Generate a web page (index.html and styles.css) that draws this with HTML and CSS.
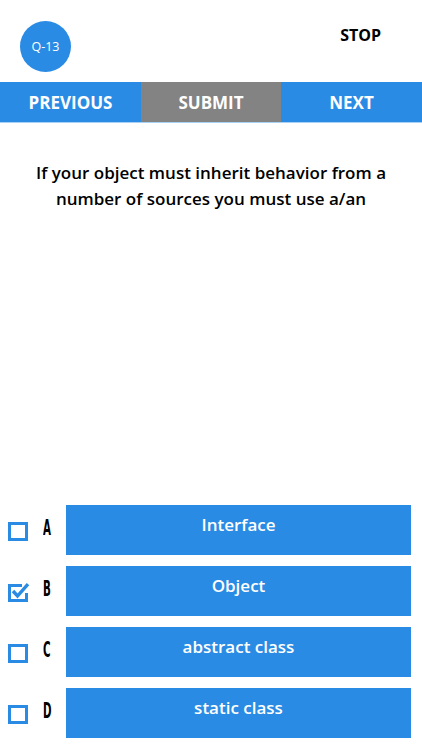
FILE: index.html
```html
<!DOCTYPE html>
<html>
<head>
<meta charset="utf-8">
<link rel="stylesheet" href="styles.css">
</head>
<body>
<div class="page">
  <header class="top">
    <div class="badge">Q-13</div>
    <div class="stop">STOP</div>
  </header>
  <nav class="nav">
    <div class="nav-item">PREVIOUS</div>
    <div class="nav-item nav-submit">SUBMIT</div>
    <div class="nav-item">NEXT</div>
  </nav>
  <div class="question">If your object must inherit behavior from a number of sources you must use a/an</div>
  <div class="options">
    <div class="option">
      <div class="check"><svg width="22" height="22" viewBox="0 0 22 22"><rect x="2.5" y="3.5" width="17" height="16" fill="none" stroke="#2a8be5" stroke-width="3"/></svg></div>
      <div class="letter">A</div>
      <div class="answer">Interface</div>
    </div>
    <div class="option">
      <div class="check"><svg width="22" height="22" viewBox="0 0 22 22"><path d="M15 4.5H2.5V19.5H19.5V12" fill="none" stroke="#2a8be5" stroke-width="3"/><path d="M6 10L10.5 15L21 3" fill="none" stroke="#2a8be5" stroke-width="3.4"/></svg></div>
      <div class="letter">B</div>
      <div class="answer">Object</div>
    </div>
    <div class="option">
      <div class="check"><svg width="22" height="22" viewBox="0 0 22 22"><rect x="2.5" y="3.5" width="17" height="16" fill="none" stroke="#2a8be5" stroke-width="3"/></svg></div>
      <div class="letter">C</div>
      <div class="answer">abstract class</div>
    </div>
    <div class="option">
      <div class="check"><svg width="22" height="22" viewBox="0 0 22 22"><rect x="2.5" y="3.5" width="17" height="16" fill="none" stroke="#2a8be5" stroke-width="3"/></svg></div>
      <div class="letter">D</div>
      <div class="answer">static class</div>
    </div>
  </div>
</div>
</body>
</html>
```
FILE: styles.css
```css
html, body {
  margin: 0;
  padding: 0;
  background: #ffffff;
}
.page {
  width: 422px;
  height: 750px;
  display: flex;
  flex-direction: column;
  font-family: "Open Sans", "DejaVu Sans", sans-serif;
}
.top {
  height: 82px;
  display: flex;
  justify-content: space-between;
  align-items: flex-start;
}
.badge {
  width: 51px;
  height: 51px;
  margin: 21px 0 0 20px;
  border-radius: 50%;
  background: #2a8be5;
  color: #ffffff;
  font-size: 12.5px;
  display: flex;
  align-items: center;
  justify-content: center;
}
.stop {
  margin: 24px 41px 0 0;
  font-size: 16px;
  font-weight: 700;
  color: #000000;
}
.nav {
  height: 40px;
  display: grid;
  grid-template-columns: 141px 140px 141px;
  border-bottom: 1px solid #a9d1f5;
}
.nav-item {
  background: #2a8be5;
  color: #ffffff;
  font-size: 17px;
  font-weight: 700;
  display: flex;
  align-items: center;
  justify-content: center;
}
.nav-submit {
  background: #838383;
}
.question {
  margin: 37px 30px 0;
  text-align: center;
  font-size: 17px;
  font-weight: 600;
  line-height: 26px;
  color: #000000;
}
.options {
  margin-top: auto;
  padding-bottom: 12px;
  display: flex;
  flex-direction: column;
  gap: 11px;
}
.option {
  display: flex;
  align-items: flex-start;
  height: 50px;
}
.check {
  width: 22px;
  height: 22px;
  margin: 15px 0 0 7px;
}
.letter {
  width: 37px;
  margin-top: 10px;
  padding-left: 14px;
  box-sizing: border-box;
  font-family: "DejaVu Sans Condensed", "DejaVu Sans", sans-serif;
  font-weight: 700;
  font-size: 22px;
  color: #000000;
  transform: scaleX(0.52);
  transform-origin: 14px center;
}
.answer {
  flex: 1;
  height: 50px;
  margin-right: 11px;
  background: #2a8be5;
  color: #ffffff;
  font-size: 17px;
  font-weight: 600;
  text-align: center;
  line-height: 22px;
  padding-top: 9px;
  box-sizing: border-box;
}
```
